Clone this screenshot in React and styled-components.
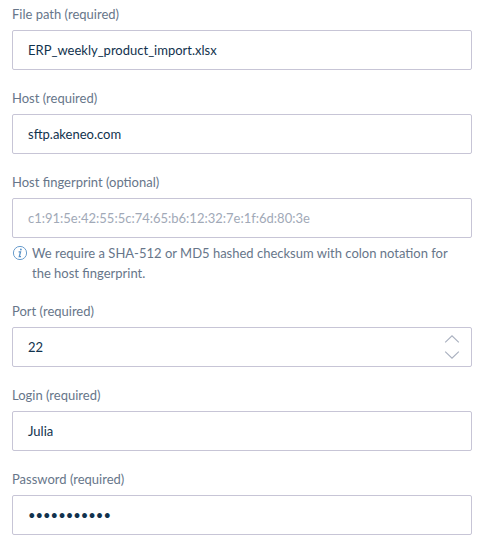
import React from 'react';
import styled, { createGlobalStyle } from 'styled-components';

const Global = createGlobalStyle`
  * { box-sizing: border-box; }
  body { margin: 0; background: #fff; }
`;
const Form = styled.form`
  display: flex;
  flex-direction: column;
  gap: 20px;
  width: 484px;
  height: 544px;
  overflow: hidden;
  padding: 6px 12px 0;
  font-family: Lato, sans-serif;
  font-size: 13px;
`;
const Field = styled.div`
  display: flex;
  flex-direction: column;
`;
const Label = styled.label`
  height: 16px;
  line-height: 16px;
  margin-bottom: 8px;
  color: #67768a;
`;
const Control = styled.div`
  display: flex;
  align-items: center;
  justify-content: space-between;
  height: 40px;
  padding: 0 11px 0 15px;
  border: 1px solid #c7c5d6;
  border-radius: 2px;
`;
const Value = styled.span`
  color: ${(p) => (p.$placeholder ? '#a1a9b7' : '#11324d')};
  line-height: 16px;
`;
const Spinner = styled.svg`
  width: 16px;
  height: 26px;
`;
const Helper = styled.div`
  display: flex;
  gap: 4px;
  margin-top: 5px;
  color: #67768a;
  line-height: 20px;
`;
const InfoIcon = styled.svg`
  flex: none;
  width: 16px;
  height: 16px;
  margin-top: 2px;
`;

function TextField({ label, children, helper }) {
  return (
    <Field>
      <Label>{label}</Label>
      <Control>{children}</Control>
      {helper}
    </Field>
  );
}

export default function App() {
  return (
    <>
      <Global />
      <Form>
        <TextField label="File path (required)"><Value>ERP_weekly_product_import.xlsx</Value></TextField>
        <TextField label="Host (required)"><Value>sftp.akeneo.com</Value></TextField>
        <TextField
          label="Host fingerprint (optional)"
          helper={
            <Helper>
              <InfoIcon viewBox="0 0 16 16" fill="none" stroke="#5992c7">
                <circle cx="8" cy="8" r="6.6" strokeWidth="0.9" />
                <path d="M6.6 6.9h1.9L7.3 11.6H9" strokeWidth="1.3" />
                <circle cx="8.9" cy="4.5" r="0.9" fill="#5992c7" stroke="none" />
              </InfoIcon>
              <span>We require a SHA-512 or MD5 hashed checksum with colon notation for<br />the host fingerprint.</span>
            </Helper>
          }
        >
          <Value $placeholder>c1:91:5e:42:55:5c:74:65:b6:12:32:7e:1f:6d:80:3e</Value>
        </TextField>
        <TextField label="Port (required)">
          <Value>22</Value>
          <Spinner viewBox="0 0 16 26" fill="none" stroke="#a9b0bf" strokeWidth="1.15">
            <path d="M1.2 8.4L8 1.8l6.8 6.6M1.2 17.6L8 24.2l6.8-6.6" />
          </Spinner>
        </TextField>
        <TextField label="Login (required)"><Value>Julia</Value></TextField>
        <TextField label="Password (required)">
          <Value>•••••••••••</Value>
        </TextField>
      </Form>
    </>
  );
}
